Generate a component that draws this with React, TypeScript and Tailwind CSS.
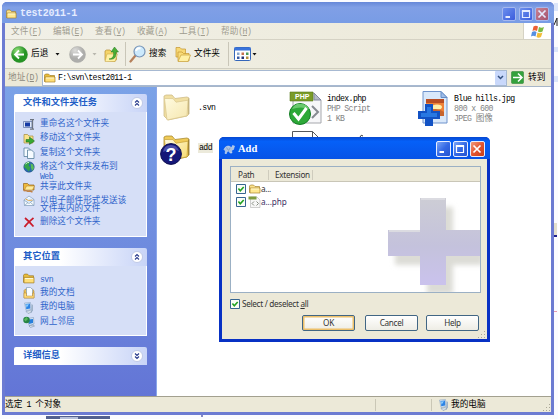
import React from "react";

const cjk = "font-['Liberation_Mono','Noto_Sans_CJK_SC',monospace]";

function M({ children }: { children: React.ReactNode }) {
  return <span className="text-[8.2px] tracking-[-0.59px]">{children}</span>;
}

function Folder({ w = 12, h = 10, pale = false }: { w?: number; h?: number; pale?: boolean }) {
  return (
    <svg width={w} height={h} viewBox="0 0 24 20" preserveAspectRatio="none" className="shrink-0">
      <path d="M1 17V4l2-2h6l3 3h9v12z" fill={pale ? "#fbe28c" : "#e9bd3c"} stroke="#94701c" strokeWidth="1.2" />
      <path d="M2 18V8h20v10z" fill={pale ? "#ffe88f" : "#ffdf78"} stroke="#a8832c" strokeWidth="1.4" />
      <path d="M4 10h16" stroke="#fffbd8" strokeWidth="1.8" />
    </svg>
  );
}

function LargeFolder({ bright = false }: { bright?: boolean }) {
  const id = bright ? "lfb" : "lfp";
  return (
    <svg width="27" height="27" viewBox="0 0 27 27" className="shrink-0">
      <defs>
        <linearGradient id={id} x1="0" y1="0" x2="1" y2="1">
          <stop offset="0" stopColor="#fffbe0" />
          <stop offset="1" stopColor={bright ? "#f6d868" : "#f5e6ae"} />
        </linearGradient>
      </defs>
      <path d="M1 22V2L3 1h6l3 3.5L24 3l2 1v16l-2 2L5 26z" fill={bright ? "#f0cb58" : "#f1dfa2"} stroke={bright ? "#a98b32" : "#cfbd88"} strokeWidth=".8" />
      <path d="M1.5 4.5 4 26l20-4.2 1-15.6-12 2-3-3.6z" fill={"url(#" + id + ")"} stroke={bright ? "#c49f35" : "#d9c68c"} strokeWidth=".7" />
      <path d="M25.6 4.5V20" stroke={bright ? "#8d742d" : "#b9a979"} strokeWidth=".8" />
    </svg>
  );
}

function Computer() {
  return (
    <svg width="11" height="12" viewBox="0 0 22 24" className="shrink-0">
      <path d="M3 2 15 1l1 14-10 2z" fill="#d9e7f5" stroke="#7d99b8" />
      <path d="M5 4l9-1 .5 10-8 1.5z" fill="#2d83e4" />
      <path d="M6 5l6-.5-5 7z" fill="#8fd0ff" />
      <path d="m17 4 3 2v12l-4 2z" fill="#9eb2c9" />
      <path d="m6 19 8-2 4 3-8 3z" fill="#dce6ef" stroke="#6e86a0" />
    </svg>
  );
}

function TaskIcon({ kind }: { kind: string }) {
  if (kind === "computer") return <Computer />;
  if (kind === "folder") return <Folder w={12} h={11} />;
  return (
    <svg width="12" height="12" viewBox="0 0 24 24" className="shrink-0">
      {kind === "rename" && (
        <>
          <path d="M1 7h17v12H1z" fill="#dfe9f7" stroke="#6076a8" strokeWidth="1.5" />
          <path d="M4 9h10v8H4z" fill="#173ba6" />
          <path d="M14 3h8M14 22h8M19 3v19" stroke="#6c7480" strokeWidth="2.5" />
        </>
      )}
      {kind === "move" && (
        <>
          <path d="M2 20V3h7l3 3h8v14z" fill="#fbe38c" stroke="#a48a3c" strokeWidth="1.4" />
          <path d="M6 13h7V8l10 8-10 7v-5H6z" fill="#37a831" stroke="#18681b" />
        </>
      )}
      {kind === "copy" && (
        <g fill="#f6fbff" stroke="#4f7896" strokeWidth="1.5">
          <path d="M2 2h9l4 4v13H2z" />
          <path d="M9 6h8l5 5v12H9z" />
        </g>
      )}
      {kind === "web" && (
        <>
          <circle cx="12" cy="12" r="10.5" fill="#2769ad" stroke="#1a477c" />
          <path d="M4 5c4-4 9-4 10-2l-3 6 4 4-3 8-5-5-5-4z" fill="#35a34a" />
          <path d="m15 5 5 2 2 7-4 6-2-7z" fill="#5abe59" />
          <path d="M5 6q4-4 7-3" stroke="#d6f4d7" strokeWidth="2" fill="none" />
        </>
      )}
      {kind === "share" && (
        <>
          <path d="M1 18V5h8l3 3h10v10z" fill="#efba3c" stroke="#94651b" strokeWidth="1.4" />
          <path d="m3 18 4-8h16l-4 8z" fill="#ffec9a" stroke="#a87624" />
          <path d="M1 20c4-4 8 3 13 0l5 2" stroke="#c08246" strokeWidth="3" fill="none" />
        </>
      )}
      {kind === "mail" && (
        <>
          <path d="M2 10 12 2l10 7v12H3z" fill="#f5fbff" stroke="#7f9bb9" strokeWidth="1.4" />
          <path d="m5 8 13-2 1 8H5z" fill="#d8eaff" />
          <path d="m2 10 10 7 10-8M3 21l7-6M22 21l-7-6" fill="none" stroke="#809db7" strokeWidth="1.4" />
          <path d="m5 8 6 3 8-1" stroke="#e8aa4b" strokeWidth="2" fill="none" />
        </>
      )}
      {kind === "delete" && <path d="M4 4c5 4 10 9 17 17M21 4C14 10 8 15 3 22" fill="none" stroke="#ca1c2b" strokeWidth="3.5" />}
      {kind === "documents" && (
        <>
          <path d="M2 22V7l3-3h14l3 4v14z" fill="#e9bd52" stroke="#9d742b" />
          <path d="M7 1h8l4 4v14H7z" fill="#f9fdff" stroke="#7a98b5" strokeWidth="1.3" />
          <path d="M2 22V12h5v6h12v-6h3v10z" fill="#ffdc7a" stroke="#b58530" />
        </>
      )}
      {kind === "network" && (
        <>
          <path d="m9 5 12-2 1 13-10 3z" fill="#d9e8f8" stroke="#6c88a9" />
          <path d="m11 7 9-1v8l-8 2z" fill="#267edb" />
          <circle cx="7" cy="8" r="6.5" fill="#268345" />
          <path d="m2 7 5-5 3 4-5 5z" fill="#59b85b" />
          <path d="m12 20 8-2 3 2-8 3z" fill="#d5e1ee" stroke="#6d839f" />
        </>
      )}
    </svg>
  );
}

function Chevron({ down = false }: { down?: boolean }) {
  return (
    <svg width="12" height="12" viewBox="0 0 24 24" className="shrink-0">
      <circle cx="12" cy="12" r="11" fill="#fff" stroke="#b4bfdf" strokeWidth="1.5" />
      <path d={down ? "m8 7 4 4 4-4M8 13l4 4 4-4" : "m8 11 4-4 4 4M8 17l4-4 4 4"} fill="none" stroke="#293b8c" strokeWidth="2.2" />
    </svg>
  );
}

function PanelHead({ title, down = false }: { title: string; down?: boolean }) {
  return (
    <div className="flex h-[18px] items-center justify-between rounded-t-[2px] bg-linear-to-r from-white from-35% to-[#c8d4f7] pl-[9px] pr-[4px]">
      <span className="text-[9.25px] font-bold leading-[12px] text-[#215dc6]">{title}</span>
      <Chevron down={down} />
    </div>
  );
}

function Task({ kind, h, children }: { kind: string; h: string; children: React.ReactNode }) {
  return (
    <div className={"flex items-start gap-[5px] whitespace-nowrap " + h}>
      <TaskIcon kind={kind} />
      <div className="pt-[1.5px] text-[8.65px] leading-[9px] text-[#2f64ca]">{children}</div>
    </div>
  );
}

function WinButton({ kind, dim = false }: { kind: "min" | "max" | "close"; dim?: boolean }) {
  const bg =
    kind === "close"
      ? dim
        ? "bg-linear-to-br from-[#c98393] to-[#a5526f]"
        : "bg-linear-to-br from-[#f09a7b] via-[#e35530] to-[#c73d18]"
      : dim
        ? "bg-linear-to-br from-[#6d8fee] to-[#3c5bdc]"
        : "bg-linear-to-br from-[#7ba4f6] via-[#3569e5] to-[#2453d0]";
  const size = dim ? "h-[14px] w-[14px] border-[#a5b8ef]" : "h-[16px] w-[15.5px] border-[#e6edff]";
  const stroke = dim ? "#e4eaff" : "#fff";
  return (
    <div className={"flex items-center justify-center rounded-[2px] border " + bg + " " + size}>
      <svg width="10" height="10" viewBox="0 0 10 10">
        {kind === "min" && <path d="M1.5 8h4.5" stroke={stroke} strokeWidth="2" />}
        {kind === "max" && <path d="M1.5 2v6.5h7V2" fill="none" stroke={stroke} strokeWidth="1.2" />}
        {kind === "max" && <path d="M.9 2h8.2" stroke={stroke} strokeWidth="2" />}
        {kind === "close" && <path d="m1.5 1.5 7 7m0-7-7 7" stroke={stroke} strokeWidth="1.7" />}
      </svg>
    </div>
  );
}

function Caret({ gray = false }: { gray?: boolean }) {
  return (
    <svg width="5" height="3" viewBox="0 0 5 3" className="shrink-0">
      <path d="M.5 0h4L2.5 2.5z" fill={gray ? "#b8b7ae" : "#111"} />
    </svg>
  );
}

function NavCircle({ gray = false }: { gray?: boolean }) {
  const id = gray ? "nf" : "nb";
  return (
    <svg width="17" height="17" viewBox="0 0 34 34" className="shrink-0">
      <defs>
        <radialGradient id={id} cx=".35" cy=".25">
          <stop offset="0" stopColor={gray ? "#dcdcda" : "#92df79"} />
          <stop offset="1" stopColor={gray ? "#adadab" : "#259424"} />
        </radialGradient>
      </defs>
      <circle cx="17" cy="17" r="16" fill={"url(#" + id + ")"} stroke={gray ? "#a9a9a5" : "#2c8a2c"} />
      <path d={gray ? "M8 17h17M18 9l8 8-8 8" : "M26 17H9M16 9l-8 8 8 8"} fill="none" stroke="#fff" strokeWidth="3.6" />
    </svg>
  );
}

function Toolbar() {
  return (
    <div className="flex h-[29px] items-center border-b border-[#d0cec0] pl-[6px] text-[8.65px] leading-[12px] text-black">
      <div className="flex w-[58px] items-center">
        <NavCircle />
        <span className="ml-[3px] w-[24px] whitespace-nowrap">后退</span>
        <Caret />
      </div>
      <div className="flex w-[35px] items-center gap-[6px]"><NavCircle gray /><Caret gray /></div>
      <svg width="15" height="17" viewBox="0 0 30 34" className="shrink-0">
        <path d="M2 29V10l3-2h7l3 3h10v16l-3 4z" fill="#f5d469" stroke="#b58e32" strokeWidth="1.4" />
        <path d="m2 31 4-15h21l-5 15z" fill="#fff1a5" stroke="#c4a044" />
        <path d="M10 26c8-1 10-6 9-14h-5l7-10 8 10h-5c1 11-4 16-14 14z" fill="#4baf36" stroke="#217721" />
      </svg>
      <div className="ml-[6px] h-[24px] w-px bg-[#c9c6b8]" />
      <svg width="18" height="18" viewBox="0 0 36 36" className="ml-[3px] shrink-0">
        <path d="m3 33 10-12" stroke="#b5805c" strokeWidth="4.5" strokeLinecap="round" />
        <circle cx="21" cy="13" r="11" fill="#cce9fc" stroke="#7895b8" strokeWidth="2.4" />
        <path d="M14 12q2-7 9-5" fill="none" stroke="#fff" strokeWidth="4" />
      </svg>
      <span className="ml-[2px] w-[26px] whitespace-nowrap">搜索</span>
      <svg width="16" height="17" viewBox="0 0 32 34" className="shrink-0">
        <path d="M2 22V3h8l3 3h8v16z" fill="#f7d873" stroke="#c39530" strokeWidth="1.4" />
        <path d="M6 30V12h8l3 3h11v15z" fill="#f9dc79" stroke="#c39530" strokeWidth="1.4" />
        <path d="m6 31 6-13h19l-5 13z" fill="#fff0a4" stroke="#c9a23d" strokeWidth="1.4" />
      </svg>
      <span className="ml-[3px] w-[34px] whitespace-nowrap">文件夹</span>
      <div className="h-[24px] w-px bg-[#c9c6b8]" />
      <svg width="17" height="14" viewBox="0 0 34 28" className="ml-[5px] shrink-0">
        <rect x="1" y="1" width="32" height="26" rx="2" fill="#fff" stroke="#3466ba" strokeWidth="2" />
        <path d="M1 1h32v6H1z" fill="#3973db" />
        <path d="M6 11h5v5H6z" fill="#86a5cd" /><path d="M15 11h5v5h-5z" fill="#c6704f" /><path d="M24 11h5v5h-5z" fill="#4b9b56" />
        <path d="M6 19h5v5H6z" fill="#3659a2" /><path d="M15 19h5v5h-5z" fill="#243376" /><path d="M24 19h5v5h-5z" fill="#b8913e" />
      </svg>
      <div className="ml-[1px] flex"><Caret /></div>
    </div>
  );
}

function SidePanel() {
  return (
    <div className="flex w-[151px] shrink-0 flex-col bg-linear-to-b from-[#7ba2e7] to-[#6375d6] px-[9px] pt-[7px]">
      <PanelHead title="文件和文件夹任务" />
      <div className="h-[125px] border border-t-0 border-white bg-[#d6dff7] pl-[8px] pt-[6px]">
        <Task kind="rename" h="h-[14.5px]">重命名这个文件夹</Task>
        <Task kind="move" h="h-[14.5px]">移动这个文件夹</Task>
        <Task kind="copy" h="h-[14px]">复制这个文件夹</Task>
        <Task kind="web" h="h-[20px]">将这个文件夹发布到<br /><M>Web</M></Task>
        <Task kind="share" h="h-[14px]">共享此文件夹</Task>
        <Task kind="mail" h="h-[21px]"><div className="leading-[8.5px]">以电子邮件形式发送该<br />文件夹内的文件</div></Task>
        <Task kind="delete" h="h-[14px]">删除这个文件夹</Task>
      </div>
      <div className="mt-[11px]"><PanelHead title="其它位置" /></div>
      <div className="h-[70px] border border-t-0 border-white bg-[#d6dff7] pl-[8px] pt-[7px]">
        <Task kind="folder" h="h-[14px]"><M>svn</M></Task>
        <Task kind="documents" h="h-[14.5px]">我的文档</Task>
        <Task kind="computer" h="h-[14.5px]"><span className="ml-px">我的电脑</span></Task>
        <Task kind="network" h="h-[14px]">网上邻居</Task>
      </div>
      <div className="mt-[11px]"><PanelHead title="详细信息" down /></div>
    </div>
  );
}

function Files() {
  return (
    <div className="grid min-w-0 flex-1 auto-rows-[40px] grid-cols-[126px_128px_1fr] overflow-hidden border-l border-[#8aa6e8] bg-white pl-[6px] pt-[4px] text-[8.65px] leading-[9px] text-black">
      <div className="flex items-center gap-[8px] pb-[7px]"><LargeFolder /><M>.svn</M></div>
      <div className="flex items-start gap-[4px]">
        <svg width="34" height="35" viewBox="0 0 34 35" className="shrink-0">
          <path d="M4 2h21l7 7v23H4z" fill="#f7f7f9" stroke="#a5a7ac" />
          <path d="M25 2v7h7z" fill="#b5bac6" stroke="#8388a0" />
          <path d="m23 15 6 6-6 6" fill="none" stroke="#878b92" strokeWidth="2" />
          <path d="M1 1h23v9H1z" fill="#7a9b28" stroke="#58791b" strokeWidth=".6" />
          <text x="6" y="8.2" fontSize="7" fontWeight="bold" fontFamily="Liberation Sans, sans-serif" fill="#fff">PHP</text>
          <circle cx="11" cy="23" r="10.5" fill="#2da838" stroke="#147e25" />
          <path d="M3 18q3-6 9-5 6 0 8 5-8-3-17 0z" fill="#6bc96f" />
          <path d="m4.5 22 5 6 8-11" fill="none" stroke="#fff" strokeWidth="3" />
        </svg>
        <div className="whitespace-nowrap pt-[3px]"><M>index.php</M><div className="text-[#848484]"><M>PHP Script<br />1 KB</M></div></div>
      </div>
      <div className="flex items-start gap-[5px]">
        <svg width="32" height="35" viewBox="0 0 32 35" className="shrink-0">
          <path d="M6 .5h18l6 6V32H6z" fill="#d9e8fa" stroke="#6f93cc" />
          <path d="M24 .5v6h6z" fill="#9fbde9" stroke="#668ec7" />
          <path d="M9 8h18v17H9z" fill="#ef8138" /><path d="M9 8h18v4H9z" fill="#b84d23" />
          <ellipse cx="20" cy="16" rx="5" ry="2.5" fill="#fff0ab" />
          <path d="M9 21q10-6 18 0v4H9z" fill="#c7652f" />
          <path d="M8 13h8v7h7v8h-7v7H8v-7H1v-8h7z" fill="#1252c4" />
          <path d="M10 16h4v6h6v4H4v-4h6z" fill="#2878e2" />
        </svg>
        <div className="whitespace-nowrap pt-[3px]"><M>Blue hills.jpg</M><div className="text-[#848484]"><M>800 x 600</M><br /><M>JPEG </M>图像</div></div>
      </div>
      <div className="relative flex items-start gap-[8px] pt-[4px]">
        <LargeFolder bright />
        <span className="mt-[8px] bg-[#eceadb] px-px"><M>add</M></span>
        <svg width="22" height="22" viewBox="0 0 22 22" className="absolute left-[-3px] top-[12px]">
          <circle cx="11" cy="11" r="10.4" fill="#151779" stroke="#0d0e50" />
          <path d="M3 9q1-7 8-7 6 0 8 6-8-4-16 1z" fill="#4b4ea8" />
          <text x="11" y="17.5" textAnchor="middle" fontSize="18" fontWeight="bold" fontFamily="Liberation Sans, sans-serif" fill="#fff">?</text>
        </svg>
      </div>
      <svg width="76" height="30" viewBox="0 0 76 30">
        <path d="M3.5.5h20l7 7v20h-27zM23.500.5v7h7" fill="#fff" stroke="#55575b" />
        <path d="M71 6q1-3 3-1" fill="none" stroke="#333" />
      </svg>
    </div>
  );
}

function Check() {
  return (
    <svg width="10" height="10" viewBox="0 0 10 10" className="shrink-0">
      <path d="M.5.5h9v9h-9z" fill="#fafdf7" stroke="#376591" />
      <path d="m2.4 4.5 1.9 2.2L7.7 3" fill="none" stroke="#21a121" strokeWidth="1.6" />
    </svg>
  );
}

function Grip() {
  return (
    <svg width="8" height="8" viewBox="0 0 8 8">
      <path d="M6 0h1v1H6zM3 3h1v1H3zM6 3h1v1H6zM0 6h1v1H0zM3 6h1v1H3zM6 6h1v1H6z" fill="#aaa797" />
    </svg>
  );
}

function DialogButton({ children, primary = false }: { children: string; primary?: boolean }) {
  return (
    <div className={"flex h-[16px] w-[53px] items-center justify-center rounded-[2px] border border-[#416684] bg-linear-to-b from-white to-[#eeede5] " + (primary ? "shadow-[inset_0_0_0_1.5px_#edc06a]" : "")}>{children}</div>
  );
}

function AddDialog() {
  return (
    <div className="absolute left-[219px] top-[137px] flex h-[205px] w-[271px] flex-col overflow-hidden rounded-t-[5px] bg-[#0831c4] px-[3px] pb-[3px] font-['Noto_Sans',sans-serif] text-[8.2px] leading-[12px] tracking-[-0.31px] text-[#333]">
      <div className="-mx-[3px] flex h-[22px] shrink-0 items-center bg-linear-to-b from-[#0648d2] via-[#0560f8] via-20% to-[#0753e6] pl-[4px] pr-[5px] pt-[1px]">
        <svg width="12" height="10" viewBox="0 0 24 20" className="shrink-0">
          <path d="M2 11c3-8 11-9 15-3l2-5 4 1-2 7-4 2 1 5h-4l-2-4-4 1-1 4H4l1-5z" fill="#a9c0e1" stroke="#dce8f5" />
          <path d="m7 7 4 6 4-6" fill="none" stroke="#5a7eaf" />
        </svg>
        <span className="ml-[3px] flex-1 font-['Liberation_Serif',serif] text-[10.5px] font-bold tracking-normal text-white">Add</span>
        <div className="flex gap-[1.5px]"><WinButton kind="min" /><WinButton kind="max" /><WinButton kind="close" /></div>
      </div>
      <div className="flex-1 bg-[#ece9d8] px-[8px] pt-[7px]">
        <div className="relative h-[127px] w-[251px] border border-[#9bb0c4] bg-white">
          <div className="flex h-[15px] items-center border-b border-[#c9c6b7] bg-[#ece9d8] pt-px">
            <span className="w-[38px] border-r border-[#cfccbd] pl-[7px] leading-[10px]">Path</span>
            <span className="w-[44px] border-r border-[#cfccbd] pl-[6px] leading-[10px]">Extension</span>
          </div>
          <svg width="96" height="94" viewBox="0 0 96 94" className="absolute bottom-0 right-0">
            <defs>
              <linearGradient id="plus" x1="0" y1="0" x2="0" y2="1"><stop offset="0" stopColor="#cdcdd5" /><stop offset=".55" stopColor="#c4c2dc" /><stop offset="1" stopColor="#cac2ed" /></linearGradient>
              <filter id="soft"><feGaussianBlur stdDeviation="2.5" /></filter>
            </defs>
            <path d="M40 6h26v32h30v26H66v29H40V64H8V38h32z" fill="#dcdcd6" filter="url(#soft)" transform="translate(3 3)" />
            <path d="M36 0h26v32h34v26H62v29H36V58H4V32h32z" fill="url(#plus)" />
            <path d="M37 1h24M5 33h31" stroke="#dbdbe1" strokeWidth="2" fill="none" />
          </svg>
          <div className="relative flex flex-col pl-[5px]">
            <div className="flex h-[13px] items-center"><Check /><span className="ml-[2px] flex w-[13px] justify-center"><Folder w={12} h={10} pale /></span><span>a...</span></div>
            <div className="flex h-[13px] items-center"><Check />
              <svg width="13" height="12" viewBox="0 0 26 24" className="ml-[2px]">
                <path d="M5 2h13l6 6v15H5z" fill="#f7f7f7" stroke="#a2a2a2" /><path d="M1 1h16v6H1z" fill="#7f9c3f" />
                <path d="m12 11-4 4 4 4m5-8 4 4-4 4" stroke="#858c81" strokeWidth="2" fill="none" />
              </svg><span className="tracking-[-0.1px] text-[#3b2f63]">a...php</span>
            </div>
          </div>
        </div>
        <div className="flex h-[22px] items-center gap-[2px]"><Check /><span>Select / deselect <u>a</u>ll</span></div>
        <div className="flex pl-[72px]"><DialogButton primary>OK</DialogButton><span className="w-[10px]" /><DialogButton>Cancel</DialogButton><span className="w-[8px]" /><DialogButton>Help</DialogButton></div>
        <div className="-mr-[7px] flex justify-end"><Grip /></div>
      </div>
    </div>
  );
}

export default function App() {
  const menus = [["文件", "F"], ["编辑", "E"], ["查看", "V"], ["收藏", "A"], ["工具", "T"], ["帮助", "H"]];
  return (
    <div className={"relative h-[419px] w-[558px] overflow-hidden bg-[#fbfbff] pl-[2px] pt-[2px] " + cjk}>
      <div className="flex h-[413px] w-[552px] flex-col rounded-t-[5px] bg-[#6c7bd2] px-[3px] pb-[3px]">
        <div className="-mx-[3px] flex h-[21px] shrink-0 items-center rounded-t-[5px] bg-linear-to-b from-[#6687d8] via-[#809fe6] via-25% to-[#789ce5] pl-[4px] pr-[5px] pt-[2px]">
          <Folder w={11} h={10} pale />
          <span className="ml-[3px] flex-1 text-[10px] font-bold tracking-[-0.3px] text-[#e5ecff]">test2011-1</span>
          <div className="flex gap-[2.5px]"><WinButton kind="min" dim /><WinButton kind="max" dim /><WinButton kind="close" dim /></div>
        </div>
        <div className="flex h-[17px] shrink-0 border-b border-[#d5d2c4] bg-linear-to-r from-[#f1f0e7] to-[#ece9d8] text-[8.65px] leading-[17px] text-[#9f9c8f]">
          <div className="flex flex-1 pl-[6px]">
            {menus.map(([name, key]) => (
              <span key={key} className="w-[42px] whitespace-nowrap">{name}<M>(<u>{key}</u>)</M></span>
            ))}
          </div>
          <div className="flex w-[28px] items-center justify-center border-l border-[#d5d2c4] bg-white">
            <svg width="14" height="13" viewBox="0 0 28 26">
              <path d="M5 3q5-3 9 0l-2 9q-5-3-9 0z" fill="#ec6035" /><path d="M16 4q5 3 10 0l-3 9q-5 3-9 0z" fill="#7dbb43" />
              <path d="M2 14q5-3 9 0l-2 9q-5-3-9 0z" fill="#578fe1" /><path d="M13 15q5 3 10 0l-3 9q-5 3-9 0z" fill="#f2bd38" />
            </svg>
          </div>
        </div>
        <div className="shrink-0 bg-linear-to-r from-[#f1f0e7] to-[#ece9d8]"><Toolbar /></div>
        <div className="flex h-[17px] shrink-0 items-center bg-[#ece9d8] text-[8.65px] leading-[14px]">
          <span className="w-[37px] whitespace-nowrap pl-[3px] text-[#8d8a7e]">地址<M>(<u>D</u>)</M></span>
          <div className="flex h-[16px] w-[465px] items-center border border-[#a7b9d2] bg-white pl-[1px]">
            <Folder w={12} h={10} /><span className="ml-[2px] flex-1 pt-px text-black"><M>F:\svn\test2011-1</M></span>
            <div className="flex h-[14px] w-[11px] items-center justify-center rounded-[1px] bg-[#c9d8fb]"><svg width="7" height="5" viewBox="0 0 7 5"><path d="m1 1 2.5 2.5L6 1" fill="none" stroke="#34507e" strokeWidth="1.5" /></svg></div>
          </div>
          <svg width="13" height="13" viewBox="0 0 26 26" className="ml-[4px]"><rect x="1" y="1" width="24" height="24" rx="2" fill="#34a13c" stroke="#247b2c" /><path d="M4 13h17M14 5l8 8-8 8" fill="none" stroke="#fff" strokeWidth="3" /></svg>
          <span className="ml-[4px] text-black">转到</span>
        </div>
        <div className="flex min-h-0 flex-1 border-t border-[#a7b6c9]"><SidePanel /><Files /></div>
        <div className="flex h-[16px] shrink-0 items-center border-t border-[#a3a08f] bg-[#ece9d8] text-[8.65px] leading-[14px] text-black">
          <span className="w-[370px] pt-px">选定<M> 1 </M>个对象</span>
          <span className="h-[12px] w-[57px] border-x border-[#cac7b6]" />
          <span className="ml-[6px]"><Computer /></span><span className="ml-[2px] flex-1 pt-px">我的电脑</span><span className="self-end"><Grip /></span>
        </div>
      </div>
      <svg width="4" height="419" viewBox="0 0 4 419" className="absolute right-0 top-0">
        <path d="M0 3h4v8H0zM0 47h4v5H0zM0 76h4v6H0z" fill="#dce5fa" />
        <path d="m0 25 3-7v8" fill="none" stroke="#222" />
        <path d="M0 223h3v12H0z" fill="#e3dfcd" /><path d="M0 235h3v2H0z" fill="#1f218b" /><path d="M0 311h3v1H0z" fill="#e79aaf" />
      </svg>
      <svg width="240" height="4" viewBox="0 0 240 4" className="absolute bottom-0 left-0">
        <path d="M46 1h64v3H46z" fill="#53618f" /><path d="M60 2h18v2H60z" fill="#b5bfd9" /><path d="M201 0h2v2h-2z" fill="#8589c4" />
      </svg>
      <AddDialog />
    </div>
  );
}
